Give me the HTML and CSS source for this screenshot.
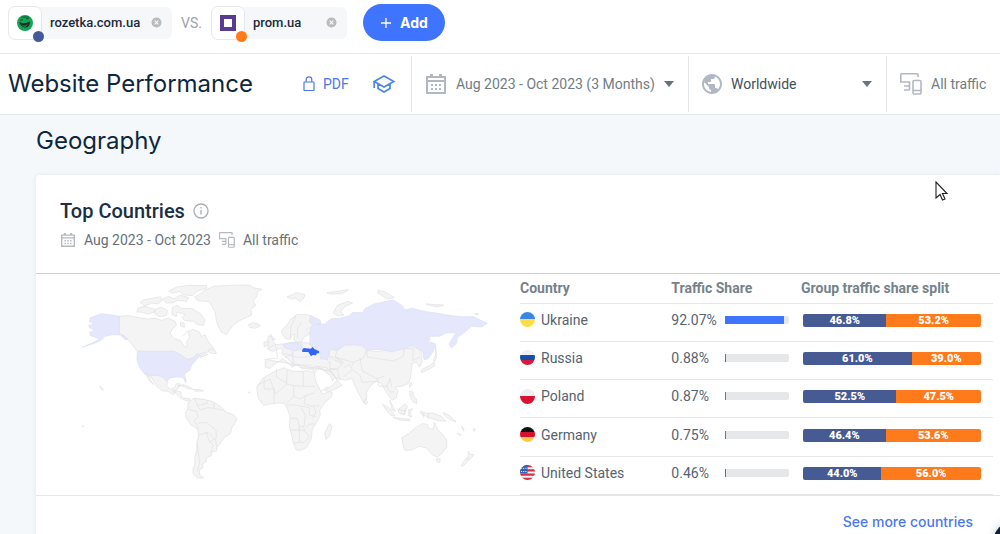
FILE: index.html
```html
<!DOCTYPE html>
<html lang="en">
<head>
<meta charset="utf-8">
<meta name="viewport" content="width=device-width, initial-scale=1">
<title>Website Performance</title>
<link rel="stylesheet" href="styles.css">
</head>
<body>
<svg class="defs" aria-hidden="true">
  <symbol id="calendar" viewBox="0 0 20 20"><path fill="currentColor" fill-rule="evenodd" d="M4 0h3v2h6V0h3v2h4v18H0V2h4zM2 8v10h16V8zM2 4v2h16V4zM5 10h2v2H5zm4 0h2v2H9zm4 0h2v2h-2zM5 14h2v2H5zm4 0h2v2H9zm4 0h2v2h-2z"/></symbol>
  <symbol id="devices" viewBox="0 0 22 22"><g fill="none" stroke="currentColor" stroke-width="1.600"><path d="M18 4V1.500a.7.7 0 0 0-.7-.7H1.500a.7.7 0 0 0-.7.7v7.500h8.700V17M4 17h5.500M4 13h5.500"/><rect x="13" y="7.500" width="8" height="13.500" rx="1"/><path d="M13 17.500h8"/></g></symbol>
  <symbol id="close" viewBox="0 0 12 12"><circle cx="6" cy="6" r="5.500" fill="#b9bcbf"/><path d="M4 4l4 4M8 4L4 8" stroke="#f6f7f8" stroke-width="1.400"/></symbol>
</svg>

<header class="sites">
  <div class="site">
    <span class="site-icon"><svg width="16" height="16" viewBox="0 0 16 16"><circle cx="8" cy="8" r="8" fill="#12a556"/><path d="M2 7q5 2.500 11-.500 0 6-5 6Q4 12 2 7z" fill="#1d2b24"/><path d="M5 9.800q3 1.500 6-.8-1 3-3 3-2 0-3-2.200z" fill="#14834a"/><path d="M3 5.500l3-1M9 4l3-1M4.500 2l7 0" stroke="#17593a" stroke-width="1.200"/></svg><i class="dot dot-blue"></i></span>
    <span class="site-name">rozetka.com.ua</span>
    <button class="remove" aria-label="Remove rozetka.com.ua"><svg width="11" height="11"><use href="#close"/></svg></button>
  </div>
  <span class="versus">VS.</span>
  <div class="site site-second">
    <span class="site-icon"><svg width="16" height="16" viewBox="0 0 16 16"><path d="M0 0h16v16H0z" fill="#583c91"/><path d="M4 4h8v8H4z" fill="#fff"/></svg><i class="dot dot-orange"></i></span>
    <span class="site-name">prom.ua</span>
    <button class="remove" aria-label="Remove prom.ua"><svg width="11" height="11"><use href="#close"/></svg></button>
  </div>
  <button class="add"><svg width="12" height="12" viewBox="0 0 12 12"><path d="M6 1v10M1 6h10" stroke="#fff" stroke-width="1.300"/></svg>Add</button>
</header>

<div class="toolbar">
  <h1>Website Performance</h1>
  <button class="pdf"><svg width="12" height="16" viewBox="0 0 12 16" fill="none" stroke="currentColor" stroke-width="1.200"><rect x="1" y="6" width="10" height="8.500" rx=".6"/><path d="M3.200 6V3.600a2.800 2.800 0 0 1 5.600 0V6"/></svg>PDF</button>
  <button class="learn" aria-label="Academy"><svg width="22" height="20" viewBox="0 0 22 20" fill="none" stroke="currentColor" stroke-width="1.700"><path d="M1.200 7.500L11 2l9.800 5.500L11 13zM1.200 7.500V14M5 10v4.500l6 3.500 6-3.500V10"/></svg></button>
  <label class="filter filter-date">
    <svg class="icon" width="20" height="20"><use href="#calendar"/></svg>
    <select aria-label="Date range"><option>Aug 2023 - Oct 2023 (3 Months)</option></select>
    <svg class="caret" width="10" height="6" viewBox="0 0 10 6"><path d="M0 0h10L5 6z" fill="#5f7480"/></svg>
  </label>
  <label class="filter filter-region">
    <svg class="icon" width="24" height="24" viewBox="0 0 24 24"><path fill="currentColor" d="M12 2C6.480 2 2 6.480 2 12s4.480 10 10 10 10-4.480 10-10S17.520 2 12 2zm-1 17.930c-3.950-.49-7-3.850-7-7.930 0-.62.08-1.210.21-1.790L9 15v1c0 1.100.9 2 2 2v1.930zm6.900-2.540c-.26-.81-1-1.390-1.900-1.390h-1v-3c0-.55-.45-1-1-1H8v-2h2c.55 0 1-.45 1-1V7h2c1.100 0 2-.9 2-2v-.41c2.930 1.190 5 4.060 5 7.410 0 2.080-.8 3.970-2.100 5.390z"/></svg>
    <select aria-label="Region"><option>Worldwide</option></select>
    <svg class="caret" width="10" height="6" viewBox="0 0 10 6"><path d="M0 0h10L5 6z" fill="#6b7487"/></svg>
  </label>
  <div class="filter filter-traffic">
    <svg class="icon" width="22" height="22"><use href="#devices"/></svg>
    <span>All traffic</span>
  </div>
</div>

<main>
  <h2>Geography</h2>
  <section class="card">
    <header class="card-head">
      <h3>Top Countries <svg width="16" height="16" viewBox="0 0 16 16" fill="none" stroke="#aaaeb3" stroke-width="1.300"><circle cx="8" cy="8" r="7"/><path d="M8 7v4.500M8 4v1.600"/></svg></h3>
      <p class="meta">
        <span class="meta-item"><svg width="16" height="14"><use href="#calendar"/></svg>Aug 2023 - Oct 2023</span>
        <span class="meta-item"><svg width="16" height="16"><use href="#devices"/></svg>All traffic</span>
      </p>
    </header>
    <div class="card-body">
      <svg class="map" viewBox="0 0 1320 660" role="img" aria-label="World map of traffic share">
        <g class="land">
          <path d="M178 124L205 122 232 127 262 132 285 130 305 136 325 129 345 139 350 151 336 163 331 175 340 190 362 197 374 216 382 215 380 200 389 187 384 171 398 163 417 170 424 184 435 180 447 204 461 217 448 230 425 235 411 241 400 249 380 253 365 241 342 230 232 229 218 211 204 193 190 181 178 177z"/>
          <path d="M234 100L252 94 281 101 285 110 262 118 249 112 231 111zM240 82L252 74 276 70 302 65 306 77 294 87 275 84 255 93zM307 73L325 64 342 71 360 61 386 68 379 79 352 76 341 83 320 84zM326 49L350 36 388 31 439 32 440 39 411 48 397 62 368 59 360 49 338 54zM285 103L304 97 322 106 320 122 300 125 284 116zM337 98L352 91 365 101 394 100 421 116 435 135 431 151 412 149 401 139 374 137 366 128 376 118 351 111 349 125 336 118zM361 142L372 144 374 157 362 154zM447 222l16 1 6 12-13 1-10-6zM421 241l10-5 13 2-12 5-11 5z"/>
          <path d="M404 65L421 57 435 45 462 34 525 30 571 31 580 38 606 43 593 49 590 66 579 77 587 91 572 104 576 119 558 128 538 137 519 151 508 166 500 178 485 172 473 151 468 131 466 113 455 91 445 80 412 76z"/>
          <path d="M565 149L580 143 597 148 601 153 584 160 569 157zM625 182l11 5 3 12 8 10-4 9-20 3 5-14-5-12zM612 202l10-3 2 12-12 4z"/>
          <path d="M250 292L270 301 299 302 318 307 322 322 320 333 331 342 344 338 349 326 360 326 356 339 346 348 340 359 325 349 307 347 292 336 281 319 272 302 265 303 272 316 280 328 270 320 263 308zM339 345l24 6 0 12 8 7 16 0 3 5-12 2-17-8-11-13-12-7zM354 332l18-3 18 8 10 6-15-2-20-9zM400 343l20 1 10 4-22 1zM373 305l6 14-2 4-6-17z"/>
          <path d="M385 381L402 370 429 373 457 379 482 395 499 412 520 419 530 431 524 446 515 459 512 475 493 487 483 502 471 518 470 528 456 530 454 542 439 548 439 560 426 567 429 578 418 585 419 600 431 609 412 609 399 595 399 579 405 568 404 548 410 530 411 502 416 480 413 462 393 450 379 429 376 414 383 403z"/>
          <path d="M120 332l8 8 2 5-7-3zM568 350l2 5-4-2zM68 452l4 2-5 0z"/>
        </g>
        <path class="visited" d="M178 124V177L190 181 204 193 197 194 181 180 157 179 135 184 124 195 103 205 66 217 94 205 118 193 110 188 91 182 89 172 104 165 89 159 87 151 105 147 89 141 90 129 124 116 151 119zM232 229H342L365 241 380 253 400 249 411 236 421 241 408 255 395 270 390 285 373 297 377 318 368 307 349 306 332 308 319 319 310 307 294 301 271 301 250 292 238 277 231 253z"/>
        <g class="borders">
          <path d="M385 165l-15 18M250 292l25 17M405 370l7 22 30-7 0-10M385 403l26 6 3 18-12 10 15 22M412 392l10 13 20-7 20 2 0-18M415 445l25-3 28 24 1 23-20 12M416 480l28-8 23 24 3 20M411 502l8 63-8 25M439 471l8 27 13 12-8 24M462 400l28 6"/>
        </g>
        <g transform="translate(630 0)">
          <g class="land">
            <path d="M37 179L35 166 50 151 63 132 80 119 105 118 123 122 119 140 128 153 110 163 119 176 100 189 95 202 78 201 71 194 74 177 66 180 60 193 48 192z"/>
            <path d="M-14 253L-15 277 0 280 16 266 27 260 38 249 45 256 59 267 66 277 77 268 93 278 125 279 139 274 152 275 170 278 180 289 202 315 187 331 163 346 187 352 183 367 165 381 149 405 151 419 139 444 127 461 124 491 110 517 93 526 79 525 70 505 65 482 58 455 60 426 55 409 44 385 23 384 0 387-19 391-35 370-40 338-22 310 5 294 17 288 43 278 52 283 70 289 94 289 111 287 130 292 130 284 93 279 85 267 70 274 60 257 43 243 35 237 38 222 30 220 10 229-3 226-3 219 14 209 40 207 59 202 95 202 120 205 125 215 150 223 174 257 180 267 178 224 202 225 225 209 260 210 278 210 290 226 318 230 360 225 403 221 420 211 452 226 455 243 456 262 449 276 439 261 426 266 424 286 422 306 416 325 395 334 375 336 384 349 378 369 366 376 351 354 343 342 331 323 319 319 301 332 290 352 290 374 280 382 266 355 252 327 247 310 225 316 195 308 187 318 180 300 160 286 146 279 136 290 133 300 139 322 155 355 163 356 205 338 216 331 202 315 190 300 182 290 150 283z"/>
            <path d="M164 473L179 446 186 454 178 483 168 494zM285 372l8 8-4 8-8-3zM359 376l9 18 9 15-10-4zM337 388L352 395 368 409 374 423 363 422 349 405zM370 427l26 4 24 1-1 6-31-3zM384 405L404 387 412 394 403 419 387 414zM416 404l13-3-8 10 4 15-9-3zM418 329l6-8 2 9-7 7zM419 348l10 3 1 12 9 9 1 14-12-6-8-18zM452 409l18 6 19-1 25 10 14 15-18-2-14-3-20-7-22-9zM520 412l22 12 16 17-14-5-20-15zM575 453l8 12-3 2zM611 460l6 5-6 4zM562 475l12 4-4 3z"/>
            <path d="M395 488L418 475 439 456 458 446 473 448 475 458 489 464 493 443 504 464 515 475 530 494 530 516 514 537 502 546 488 540 470 519 449 514 424 525 404 526 399 509zM498 552l12-1 0 11-8-1zM595 528l5 10 12 1-11 13-9 2 3-10zM588 549l8 6-18 20-4-4zM491 251l9-13-4-29 0 25 4 14-9 14-11 9-26 13 1 9 10-5 13-6 16-10z"/>
            <path d="M51 66L80 53 105 59 101 70 90 80 76 69 65 73zM171 53l65-9-20 12-34 1zM324 46l20 4 29 17-19 6-31-19zM468 87l53 3-20 6zM190 114L202 91 234 79 248 84 222 96 212 110 222 120 205 123zM616 115l10 2-10 2zM180 244l20 6 16 16-25-12zM0 177l7 8 9 9-7 0z"/>
          </g>
          <path class="visited" d="M123 122L150 135 153 148 138 148 165 147 184 131 209 130 238 122 248 112 277 113 286 100 312 87 351 79 369 74 398 93 403 105 428 100 444 105 475 111 505 115 531 120 572 125 610 125 652 145 636 156 605 154 581 174 563 187 558 207 544 219 537 207 552 182 559 173 528 174 509 184 481 184 476 201 496 206 489 231 473 252 462 254 458 230 429 211 401 221 366 230 331 224 291 224 275 212 255 208 224 211 203 226 179 222 174 254 151 251 150 236 132 218 119 210 120 191 119 163 128 151 119 138zM39 208l36-5 21 4 1 15-22 6-33-10z"/>
          <path class="leader" d="M96 226L101 219 122 221 128 216 133 222 147 229 147 234 139 236 139 241 128 240 123 244 115 231 97 231z"/>
          <g class="borders">
            <path d="M79 119L63 154 61 190M94 142L83 159 82 190M20 280l-2 25 33 20M52 283l-2 44-33 30-17-45-40 20M50 327l21 5 29 2 0-45M100 334h34M71 332v32l-20 20M71 364l19 8 17-10 27-8M-18 310v32h30v40M107 362l-5 24 20 7 27-1M51 390h22l20 3 25 5 0 22 20 5M60 430h22l6 25h14l4-35-13-23M60 465h42l15-17 18-2M87 455l2 46-17 5M102 465l16 20-16 18-13-1M130 393l8 20-12 17M150 350l24-15M180 267l0 17 20 28M180 280l22 2 19-20-26-18M202 282l8 33M221 278l18-10 8 16-25 20M202 225l-7 21 55 16 30-12 10-24M250 262l-2 10M270 248l7 40 45 23 20-7M290 226l2 20 78 12 30-14 3-23M247 284l24 18 5 20 45-3M320 310l8 24 23 0 10-25M350 334l10 17 15-1M360 310l5 25M403 221l27 0-2 35 22-9M460 414l0 14M475 415v18M80 269l45 2M39 235l45 12 41-2M45 248l27-13M66 224l5 43M17 211l6 40-30 0M135 275l25 7M160 286l40-3"/>
            <path d="M387 405l19 2M404 419l2-20"/>
          </g>
        </g>
      </svg>
      <table>
        <colgroup><col class="col-country"><col class="col-share"><col class="col-split"></colgroup>
        <thead><tr><th scope="col">Country</th><th scope="col">Traffic Share</th><th scope="col">Group traffic share split</th></tr></thead>
        <tbody>
          <tr><td><span class="country"><i class="flag ua"></i>Ukraine</span></td><td><span class="share"><span>92.07%</span><span class="track"><i style="width:92.07%"></i></span></span></td><td><span class="split"><b style="width:46.8%">46.8%</b><b>53.2%</b></span></td></tr>
          <tr><td><span class="country"><i class="flag ru"></i>Russia</span></td><td><span class="share"><span>0.88%</span><span class="track"><i style="width:0.88%"></i></span></span></td><td><span class="split"><b style="width:61%">61.0%</b><b>39.0%</b></span></td></tr>
          <tr><td><span class="country"><i class="flag pl"></i>Poland</span></td><td><span class="share"><span>0.87%</span><span class="track"><i style="width:0.87%"></i></span></span></td><td><span class="split"><b style="width:52.5%">52.5%</b><b>47.5%</b></span></td></tr>
          <tr><td><span class="country"><i class="flag de"></i>Germany</span></td><td><span class="share"><span>0.75%</span><span class="track"><i style="width:0.75%"></i></span></span></td><td><span class="split"><b style="width:46.4%">46.4%</b><b>53.6%</b></span></td></tr>
          <tr><td><span class="country"><svg class="flag" viewBox="0 0 14 14"><path fill="#f4f4f6" d="M0 0h14v14H0z"/><path d="M0 1h14M0 5h14M0 9h14M0 13h14" stroke="#d32f48" stroke-width="2"/><path fill="#2b62b5" d="M0 0h7v8H0z"/><path d="M1 3h6M1 6h6" stroke="#fff" stroke-dasharray="1 1"/></svg>United States</span></td><td><span class="share"><span>0.46%</span><span class="track"><i style="width:0.46%"></i></span></span></td><td><span class="split"><b style="width:44%">44.0%</b><b>56.0%</b></span></td></tr>
        </tbody>
      </table>
    </div>
    <footer class="card-foot"><a href="#countries">See more countries</a></footer>
  </section>
</main>
<button class="help" aria-label="Help"></button>
<svg class="pointer" width="14" height="21" viewBox="0 0 14 21" aria-hidden="true"><path d="M1 1v16l4-3.500 2.500 5.500 2.500-1-2.500-5.500H12z" fill="#fff" stroke="#222" stroke-width="1.100"/></svg>
</body>
</html>
```
FILE: styles.css
```css
* { box-sizing: border-box; }
html { overflow: hidden; }
body { margin: 0; background: #f4f8fb; color: #566370; font: 14px/20px Roboto, sans-serif; }
button, select { border: 0; margin: 0; padding: 0; background: none; font: inherit; color: inherit; }
h1, h2, h3, p { margin: 0; }
svg { display: block; flex: none; }
.defs { position: absolute; width: 0; height: 0; }

.sites { display: flex; align-items: center; height: 54px; padding: 0 8px 8px; background: #fff; border-bottom: 1px solid #e6e9ec; }
.site { display: flex; align-items: center; width: 164px; height: 32px; background: #f6f7f8; border-radius: 6px; padding-right: 10px; }
.site-second { width: 136px; }
.site-icon { position: relative; display: flex; align-items: center; justify-content: center; width: 34px; height: 34px; background: #fff; border: 1px solid #e6e9ec; border-radius: 7px; }
.site-name { flex: 1; padding-left: 8px; color: #1b2b3d; font-size: 13px; font-weight: 500; }
.dot { position: absolute; right: -3px; bottom: -3px; width: 11px; height: 11px; border-radius: 50%; }
.dot-blue { background: #465a9b; }
.dot-orange { background: #ff7a1a; }
.versus { width: 39px; text-align: center; color: #9ba3aa; }
.add { display: flex; align-items: center; justify-content: center; gap: 8px; width: 82px; height: 37px; margin-left: 16px; border-radius: 19px; background: #3e74fe; color: #fff; font: 700 14px/20px Inter, sans-serif; }

.toolbar { display: flex; align-items: center; height: 61px; background: #fff; border-bottom: 1px solid #e3e9ee; white-space: nowrap; }
h1, h2 { color: #0e2740; font: 400 24px/30px Inter, sans-serif; }
h1 { width: 295px; padding-left: 8px; }
.pdf { display: flex; align-items: center; gap: 8px; padding-left: 8px; color: #4a76ee; }
.learn { flex: 1; display: flex; justify-content: center; padding-left: 8px; color: #4b86e8; }
.filter { display: flex; align-items: center; height: 56px; border-left: 1px solid #e3e6e9; color: #6f7d86; }
.filter select { appearance: none; cursor: pointer; }
.icon { color: #b2b8c3; }
.filter-date { width: 277px; padding-left: 14px; }
.filter-date select { padding-left: 10px; flex: 0 1 218px; }
.filter-region { width: 198px; padding: 0 14px 0 11px; color: #424f5a; }
.filter-region select { flex: 1; padding-left: 7px; }
.filter-traffic { width: 114px; padding-left: 13px; gap: 9px; }

main { padding: 11px 0 0 36px; }
.card { margin-top: 19px; background: #fff; box-shadow: 0 0 4px #dfe6ec; border-radius: 4px 0 0; }
.card-head { padding: 23px 24px; border-bottom: 1px solid #ced2d6; }
h3 { display: flex; align-items: center; gap: 8px; color: #1b2f44; font-size: 20px; line-height: 26px; font-weight: 500; }
.meta { display: flex; align-items: center; margin-top: 6px; gap: 8px; color: #65717a; }
.meta-item { display: flex; align-items: center; gap: 8px; }
.meta svg { color: #b4b9bf; }
.card-body { display: grid; grid-template-columns: minmax(0, 440px) minmax(0, 1fr); gap: 20px; padding: 0 7px 0 24px; border-bottom: 1px solid #e4e7ea; }
.map { width: 100%; align-self: start; margin-top: 1px; }
.land { fill: #f4f4f5; stroke: #dfdfe2; stroke-width: 2; stroke-linejoin: round; }
.visited { fill: #e5e7fd; stroke: #dddfee; stroke-width: 2; }
.leader { fill: #3266f8; }
.borders { fill: none; stroke: #dfdfe2; stroke-width: 2; }

table { width: 100%; border-collapse: collapse; table-layout: fixed; }
.col-country { width: 32%; }
.col-share { width: 27%; }
th, td { padding: 0; text-align: left; border-bottom: 1px solid #e4e7ea; }
th { height: 29px; color: #76828a; font-weight: 700; }
th:last-child { padding-left: 2px; }
td { height: 38px; padding-bottom: 5px; }
td:last-child { padding: 0 12px 4px 4px; }
.country { display: flex; align-items: center; gap: 6px; }
.flag { width: 15px; height: 15px; border-radius: 50%; }
.ua { background: linear-gradient(#3b86e0 50%, #fddc45 50%); }
.ru { background: linear-gradient(#f0f1f4 33%, #124fae 33% 67%, #d51b3a 67%); }
.pl { background: linear-gradient(#eeeff1 50%, #d8122f 50%); }
.de { background: linear-gradient(#111 33%, #d5112d 33% 67%, #fdca3e 67%); }
.share { display: flex; align-items: center; justify-content: space-between; padding-right: 10px; }
.track { width: 64px; height: 8px; background: #e6e7e9; border-radius: 0 2px 2px 0; }
.track i { display: block; min-width: 1px; height: 100%; background: #3e74fe; }
.split { display: flex; height: 13px; border-radius: 2px; overflow: hidden; color: #fff; font-size: 11px; line-height: 13px; text-align: center; }
.split b { background: #465a94; font-weight: 900; }
.split b + b { flex: 1; background: #ff7a1a; }
.card-foot { display: flex; justify-content: flex-end; padding: 16px 27px 20px; font: 500 14px/20px Inter, sans-serif; }
.card-foot a { color: #4a78ef; text-decoration: none; }
.help { position: fixed; right: -42px; bottom: -36px; width: 50px; height: 50px; border-radius: 50%; background: #0c2238; box-shadow: 0 0 8px #ccd2d8; }
.pointer { position: absolute; left: 935px; top: 181px; }
```
